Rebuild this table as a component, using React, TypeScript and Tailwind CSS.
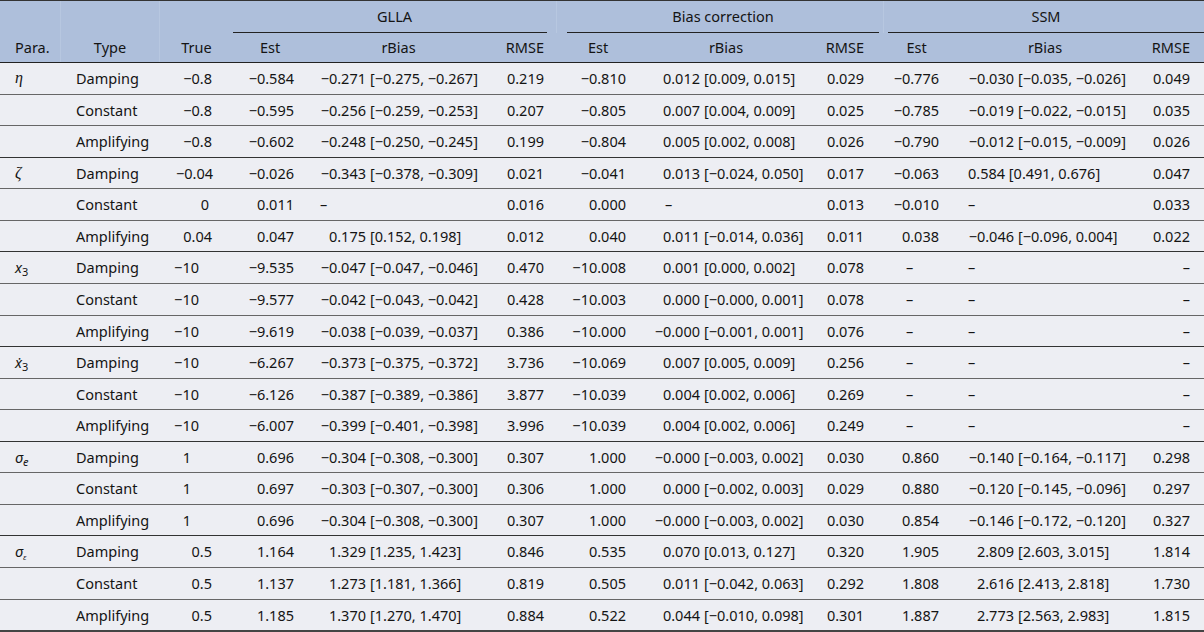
import React from "react";

// Simulation results table: GLLA vs bias correction vs SSM, per parameter and trend type.

const COLS = "grid grid-cols-[61px_99px_73px_74px_183px_66px_84px_172px_71px_67px_190px_64px]";
const HEAD_SEP = "border-r border-[#b7c7e0]";

type Block = [string, string, string];
type Row = { type: string; tru: string; tp: string; g: Block; b: Block; s: Block; sLeft?: boolean };
type Group = { key: string; rows: Row[] };

const GROUPS: Group[] = [
  {
    key: "eta",
    rows: [
      { type: "Damping", tru: "−0.8", tp: "pr-[21px]", g: ["−0.584", "−0.271 [−0.275, −0.267]", "0.219"], b: ["−0.810", "0.012 [0.009, 0.015]", "0.029"], s: ["−0.776", "−0.030 [−0.035, −0.026]", "0.049"] },
      { type: "Constant", tru: "−0.8", tp: "pr-[21px]", g: ["−0.595", "−0.256 [−0.259, −0.253]", "0.207"], b: ["−0.805", "0.007 [0.004, 0.009]", "0.025"], s: ["−0.785", "−0.019 [−0.022, −0.015]", "0.035"] },
      { type: "Amplifying", tru: "−0.8", tp: "pr-[21px]", g: ["−0.602", "−0.248 [−0.250, −0.245]", "0.199"], b: ["−0.804", "0.005 [0.002, 0.008]", "0.026"], s: ["−0.790", "−0.012 [−0.015, −0.009]", "0.026"] },
    ],
  },
  {
    key: "zeta",
    rows: [
      { type: "Damping", tru: "−0.04", tp: "pr-[20px]", g: ["−0.026", "−0.343 [−0.378, −0.309]", "0.021"], b: ["−0.041", "0.013 [−0.024, 0.050]", "0.017"], s: ["−0.063", "0.584 [0.491, 0.676]", "0.047"], sLeft: true },
      { type: "Constant", tru: "0", tp: "pr-[24px]", g: ["0.011", "–", "0.016"], b: ["0.000", "–", "0.013"], s: ["−0.010", "–", "0.033"] },
      { type: "Amplifying", tru: "0.04", tp: "pr-[21px]", g: ["0.047", "0.175 [0.152, 0.198]", "0.012"], b: ["0.040", "0.011 [−0.014, 0.036]", "0.011"], s: ["0.038", "−0.046 [−0.096, 0.004]", "0.022"] },
    ],
  },
  {
    key: "x3",
    rows: [
      { type: "Damping", tru: "−10", tp: "pr-[34px]", g: ["−9.535", "−0.047 [−0.047, −0.046]", "0.470"], b: ["−10.008", "0.001 [0.000, 0.002]", "0.078"], s: ["–", "–", "–"] },
      { type: "Constant", tru: "−10", tp: "pr-[34px]", g: ["−9.577", "−0.042 [−0.043, −0.042]", "0.428"], b: ["−10.003", "0.000 [−0.000, 0.001]", "0.078"], s: ["–", "–", "–"] },
      { type: "Amplifying", tru: "−10", tp: "pr-[34px]", g: ["−9.619", "−0.038 [−0.039, −0.037]", "0.386"], b: ["−10.000", "−0.000 [−0.001, 0.001]", "0.076"], s: ["–", "–", "–"] },
    ],
  },
  {
    key: "xdot3",
    rows: [
      { type: "Damping", tru: "−10", tp: "pr-[34px]", g: ["−6.267", "−0.373 [−0.375, −0.372]", "3.736"], b: ["−10.069", "0.007 [0.005, 0.009]", "0.256"], s: ["–", "–", "–"] },
      { type: "Constant", tru: "−10", tp: "pr-[34px]", g: ["−6.126", "−0.387 [−0.389, −0.386]", "3.877"], b: ["−10.039", "0.004 [0.002, 0.006]", "0.269"], s: ["–", "–", "–"] },
      { type: "Amplifying", tru: "−10", tp: "pr-[34px]", g: ["−6.007", "−0.399 [−0.401, −0.398]", "3.996"], b: ["−10.039", "0.004 [0.002, 0.006]", "0.249"], s: ["–", "–", "–"] },
    ],
  },
  {
    key: "sige",
    rows: [
      { type: "Damping", tru: "1", tp: "pr-[42px]", g: ["0.696", "−0.304 [−0.308, −0.300]", "0.307"], b: ["1.000", "−0.000 [−0.003, 0.002]", "0.030"], s: ["0.860", "−0.140 [−0.164, −0.117]", "0.298"] },
      { type: "Constant", tru: "1", tp: "pr-[42px]", g: ["0.697", "−0.303 [−0.307, −0.300]", "0.306"], b: ["1.000", "0.000 [−0.002, 0.003]", "0.029"], s: ["0.880", "−0.120 [−0.145, −0.096]", "0.297"] },
      { type: "Amplifying", tru: "1", tp: "pr-[42px]", g: ["0.696", "−0.304 [−0.308, −0.300]", "0.307"], b: ["1.000", "−0.000 [−0.003, 0.002]", "0.030"], s: ["0.854", "−0.146 [−0.172, −0.120]", "0.327"] },
    ],
  },
  {
    key: "sigeps",
    rows: [
      { type: "Damping", tru: "0.5", tp: "pr-[21px]", g: ["1.164", "1.329 [1.235, 1.423]", "0.846"], b: ["0.535", "0.070 [0.013, 0.127]", "0.320"], s: ["1.905", "2.809 [2.603, 3.015]", "1.814"] },
      { type: "Constant", tru: "0.5", tp: "pr-[21px]", g: ["1.137", "1.273 [1.181, 1.366]", "0.819"], b: ["0.505", "0.011 [−0.042, 0.063]", "0.292"], s: ["1.808", "2.616 [2.413, 2.818]", "1.730"] },
      { type: "Amplifying", tru: "0.5", tp: "pr-[21px]", g: ["1.185", "1.370 [1.270, 1.470]", "0.884"], b: ["0.522", "0.044 [−0.010, 0.098]", "0.301"], s: ["1.887", "2.773 [2.563, 2.983]", "1.815"] },
    ],
  },
];

const Param: React.FC<{ k: string }> = ({ k }) => {
  switch (k) {
    case "eta":
      return <span className="font-['Liberation_Serif',serif] italic text-[16px]">η</span>;
    case "zeta":
      return <span className="font-['Liberation_Serif',serif] italic text-[16px]">ζ</span>;
    case "x3":
      return (
        <span>
          <span className="italic">x</span>
          <span className="relative top-[3px] text-[11px]">3</span>
        </span>
      );
    case "xdot3":
      return (
        <span>
          <span className="italic">ẋ</span>
          <span className="relative top-[3px] text-[11px]">3</span>
        </span>
      );
    case "sige":
      return (
        <span className="italic">
          σ<span className="relative top-[3px] text-[11px]">e</span>
        </span>
      );
    default:
      return (
        <span className="italic">
          σ<span className="relative top-[3px] text-[8px]">ε</span>
        </span>
      );
  }
};

// rBias: first number right-aligned in a fixed slot, interval follows.
const RBias: React.FC<{ v: string; pad: string; dashPad: string; left?: boolean }> = ({ v, pad, dashPad, left }) => {
  if (v === "–") {
    return <div className={`flex items-center whitespace-nowrap ${pad}`}><span className={dashPad}>–</span></div>;
  }
  if (left) {
    return <div className={`flex items-center whitespace-nowrap ${pad}`}>{v}</div>;
  }
  const i = v.indexOf(" ");
  return (
    <div className={`flex items-center whitespace-nowrap ${pad}`}>
      <span className="inline-block w-[46px] text-right">{v.slice(0, i)}</span>
      <span className="pl-[4px]">{v.slice(i + 1)}</span>
    </div>
  );
};

const Est: React.FC<{ v: string; pr: string }> = ({ v, pr }) => (
  <div className={`flex items-center justify-end ${pr}`}>
    {v === "–" ? <span className="inline-block w-[33px] text-left">–</span> : v}
  </div>
);

const Num: React.FC<{ v: string; pr: string }> = ({ v, pr }) => (
  <div className={`flex items-center justify-end ${pr}`}>{v}</div>
);

export default function App() {
  return (
    <div className="w-[1204px] h-[632px] flex flex-col bg-[#edeef3] text-[#141414] font-['Noto_Sans',sans-serif] text-[14.5px] leading-none">
      {/* header */}
      <div className="bg-[#aebfdb] border-t border-[#333]">
        <div className={`${COLS} h-[32px]`}>
          <div className={HEAD_SEP} />
          <div className={HEAD_SEP} />
          <div />
          <div className="col-span-3 pr-[9px]">
            <div className="h-full flex items-center justify-center border-b border-[#222] pl-[9px]">GLLA</div>
          </div>
          <div className="col-span-3 pl-[10px] pr-[4px] border-l border-[#b7c7e0]">
            <div className="h-full flex items-center justify-center border-b border-[#222]">Bias correction</div>
          </div>
          <div className="col-span-3 pl-[4px] border-l border-[#b7c7e0]">
            <div className="h-full flex items-center justify-center border-b border-[#222]">SSM</div>
          </div>
        </div>
        <div className={`${COLS} h-[30px] border-b border-[#222]`}>
          <div className={`${HEAD_SEP} flex items-center pl-[15px]`}>Para.</div>
          <div className={`${HEAD_SEP} flex items-center justify-center`}>Type</div>
          <div className="flex items-center justify-center">True</div>
          <div className="flex items-center justify-center">Est</div>
          <div className="flex items-center justify-center">rBias</div>
          <div className="flex items-center justify-end pr-[12px]">RMSE</div>
          <div className="flex items-center justify-center">Est</div>
          <div className="flex items-center justify-center">rBias</div>
          <div className="flex items-center justify-end pr-[19px]">RMSE</div>
          <div className="flex items-center justify-center">Est</div>
          <div className="flex items-center justify-center">rBias</div>
          <div className="flex items-center justify-end pr-[14px]">RMSE</div>
        </div>
      </div>

      {/* body */}
      <div className="flex-1 flex flex-col border-b-2 border-[#444]">
        {GROUPS.map((grp, gi) =>
          grp.rows.map((r, ri) => {
            const last = gi === GROUPS.length - 1 && ri === 2;
            return (
              <div
                key={`${grp.key}-${ri}`}
                className={`${COLS} flex-1 min-h-0 ${last ? "" : ri === 2 ? "border-b border-[#333]" : "border-b border-[#666]"}`}
              >
                <div className="flex items-center pl-[15px]">{ri === 0 ? <Param k={grp.key} /> : null}</div>
                <div className="flex items-center pl-[15px]">{r.type}</div>
                <Num v={r.tru} pr={r.tp} />
                <Est v={r.g[0]} pr="pr-[13px]" />
                <RBias v={r.g[1]} pad="pl-[13px]" dashPad="pl-0" />
                <Num v={r.g[2]} pr="pr-[12px]" />
                <Est v={r.b[0]} pr="pr-[14px]" />
                <RBias v={r.b[1]} pad="pl-[14px]" dashPad="pl-[11px]" />
                <Num v={r.b[2]} pr="pr-[19px]" />
                <Est v={r.s[0]} pr="pr-[11px]" />
                <RBias v={r.s[1]} pad="pl-[18px]" dashPad="pl-0" left={r.sLeft} />
                <Num v={r.s[2]} pr="pr-[14px]" />
              </div>
            );
          })
        )}
      </div>
    </div>
  );
}
